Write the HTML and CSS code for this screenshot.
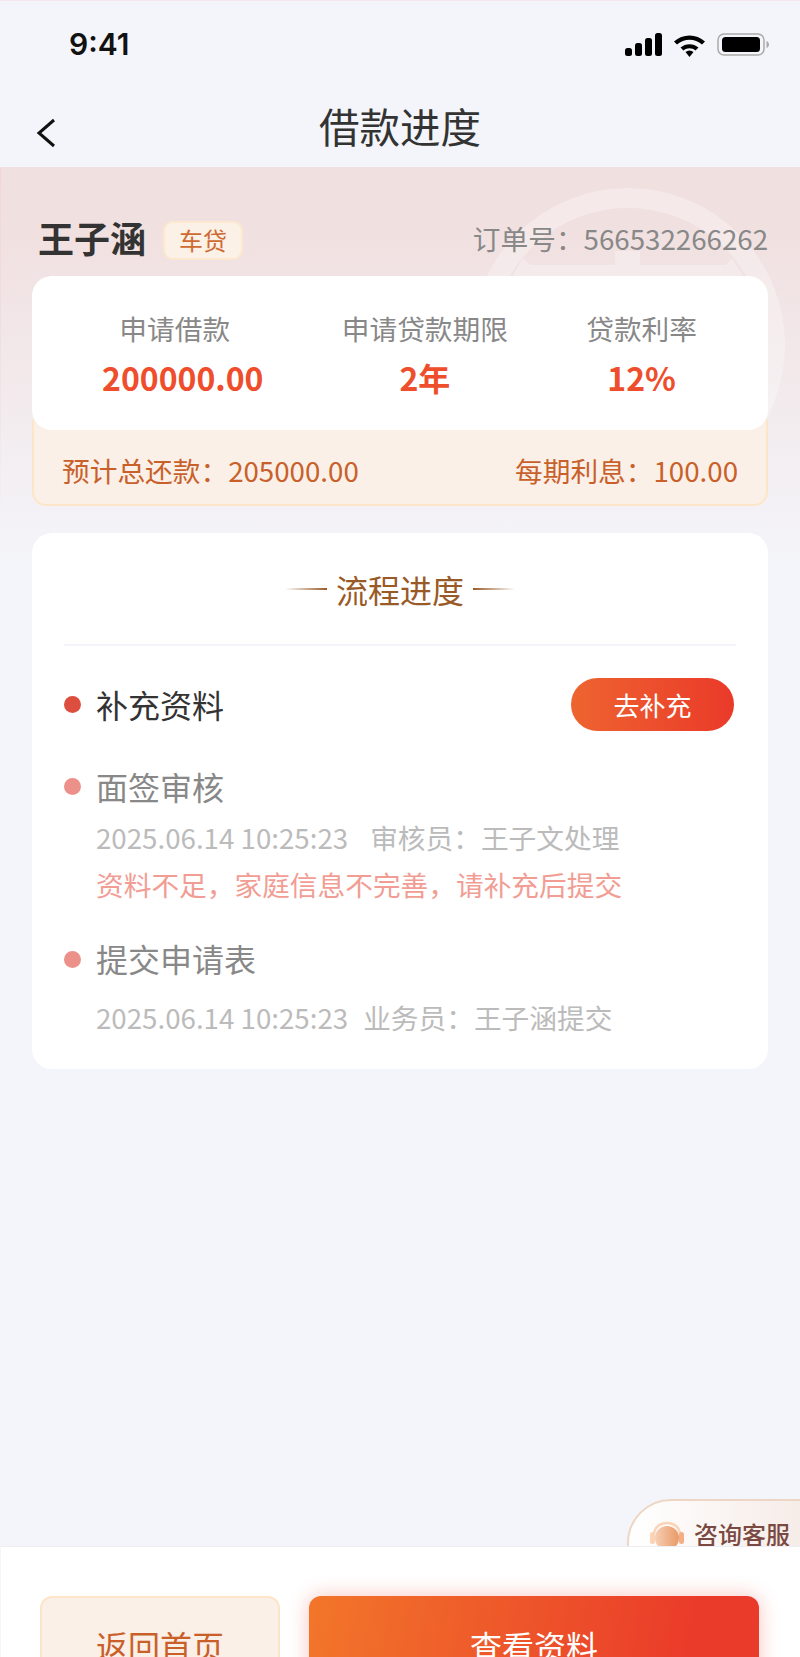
FILE: index.html
```html
<!DOCTYPE html>
<html lang="zh-CN">
<head>
    <meta charset="UTF-8">
    <meta name="viewport" content="width=device-width, initial-scale=1.0">
    <title>借款进度</title>
    <link rel="stylesheet" href="styles.css">
</head>
<body>
    <div class="page">
        <div class="status-bar">
            <span class="time">9:41</span>
            <div class="status-icons">
                <svg width="37" height="23" viewBox="0 0 37 23"><rect x="0" y="15" width="7" height="8" rx="2.500"/><rect x="10" y="10" width="7" height="13" rx="2.500"/><rect x="20" y="5" width="7" height="18" rx="2.500"/><rect x="30" y="0" width="7" height="23" rx="2.500"/></svg>
                <svg width="33" height="24" viewBox="0 0 33 24"><path d="M1 8.5C9.500 .5 23.500 .5 32 8.500L29 11.500C22 5 11 5 4 11.500Z"/><path d="M7.500 14.500C12.500 10 20.500 10 25.500 14.500L22.500 17.500C19 14.500 14 14.500 10.500 17.500Z"/><path d="M12.500 19C15 17 18 17 20.500 19L16.500 24Z"/></svg>
                <svg width="52" height="23" viewBox="0 0 52 23"><rect x="1" y="1" width="46" height="21" rx="6" fill="none" stroke="#aaa" stroke-width="1.500"/><rect x="5" y="4" width="38" height="15" rx="3.500"/><path d="M49.500 8C51 8.500 52 10 52 11.500C52 13 51 14.500 49.500 15Z" fill="#aaa"/></svg>
            </div>
        </div>

        <div class="nav-bar">
            <svg class="back" width="20" height="30" viewBox="0 0 20 30"><path d="M18 2L3 15L18 28" fill="none" stroke="#111" stroke-width="3"/></svg>
            <h1 class="nav-title">借款进度</h1>
        </div>

        <div class="content">
            <svg class="watermark" width="340" height="340" viewBox="0 0 340 340">
                <circle cx="170" cy="170" r="147" fill="none" stroke="#fff" stroke-width="20"/>
                <path d="M65 83L38 130H302L274 83L268 90H182V76H157V90H72Z" fill="#fff"/>
            </svg>

            <div class="order-head">
                <div class="customer">
                    <span class="customer-name">王子涵</span>
                    <span class="tag">车贷</span>
                </div>
                <span class="order-no">订单号：566532266262</span>
            </div>

            <div class="summary">
                <div class="summary-main">
                    <div class="stat stat-amount">
                        <div class="stat-label">申请借款</div>
                        <div class="stat-value">200000.00</div>
                    </div>
                    <div class="stat">
                        <div class="stat-label">申请贷款期限</div>
                        <div class="stat-value">2年</div>
                    </div>
                    <div class="stat">
                        <div class="stat-label">贷款利率</div>
                        <div class="stat-value">12%</div>
                    </div>
                </div>
                <div class="summary-extra">
                    <span>预计总还款：205000.00</span>
                    <span>每期利息：100.00</span>
                </div>
            </div>

            <div class="progress">
                <div class="progress-head">
                    <i class="flourish flourish-left"></i>
                    <span class="progress-title">流程进度</span>
                    <i class="flourish flourish-right"></i>
                </div>

                <div class="step step-current">
                    <div class="step-row">
                        <i class="dot"></i>
                        <span class="step-title">补充资料</span>
                        <button class="step-btn">去补充</button>
                    </div>
                </div>

                <div class="step step-review">
                    <div class="step-row">
                        <i class="dot"></i>
                        <span class="step-title">面签审核</span>
                    </div>
                    <div class="step-meta"><span>2025.06.14 10:25:23</span><span class="meta-who">审核员：王子文处理</span></div>
                    <div class="step-error">资料不足，家庭信息不完善，请补充后提交</div>
                </div>

                <div class="step step-apply">
                    <div class="step-row">
                        <i class="dot"></i>
                        <span class="step-title">提交申请表</span>
                    </div>
                    <div class="step-meta"><span>2025.06.14 10:25:23</span><span class="meta-who">业务员：王子涵提交</span></div>
                </div>
            </div>
        </div>

        <div class="consult">
            <svg width="34" height="34" viewBox="0 0 34 34">
                <defs>
                    <linearGradient id="headGrad" x1="0" y1="0" x2="1" y2="0">
                        <stop offset="0" stop-color="#f7cfb4"/>
                        <stop offset="1" stop-color="#e99a68"/>
                    </linearGradient>
                </defs>
                <path d="M4 15C4 -1 30 -1 30 15" fill="none" stroke="#fbd3b6" stroke-width="2.500"/>
                <rect x="0" y="12" width="5" height="12" rx="2.500" fill="#fbd3b6"/>
                <rect x="29" y="12" width="5" height="12" rx="2.500" fill="#f3ae84"/>
                <circle cx="17" cy="18" r="12" fill="url(#headGrad)"/>
            </svg>
            <span class="consult-text">咨询客服</span>
        </div>

        <div class="footer">
            <button class="btn btn-home">返回首页</button>
            <button class="btn btn-view">查看资料</button>
        </div>
    </div>
</body>
</html>
```

FILE: styles.css
```css
* {
    box-sizing: border-box;
    margin: 0;
    padding: 0;
}

html, body {
    height: 100%;
    overflow: hidden;
}

body {
    font-family: "Noto Sans CJK SC", "Noto Sans", sans-serif;
    background-color: #f4f5fa;
    color: #333;
}

.page {
    position: relative;
    display: flex;
    flex-direction: column;
    height: 1657px;
    overflow: hidden;
    border-top: 1px solid #f5e8ec;
}

.status-bar {
    display: flex;
    justify-content: space-between;
    align-items: center;
    height: 87px;
    padding: 0 31px 0 69px;
}

.time {
    margin-bottom: 2px;
    font-family: Inter, "Liberation Sans", sans-serif;
    font-size: 30px;
    font-weight: 600;
    color: #111;
}

.status-icons {
    display: flex;
    align-items: center;
    gap: 11px;
}

.nav-bar {
    position: relative;
    display: flex;
    justify-content: center;
    align-items: center;
    height: 79px;
    padding-bottom: 4px;
}

.back {
    position: absolute;
    left: 36px;
    top: 30px;
}

.nav-title {
    font-size: 40.500px;
    font-weight: 400;
    line-height: 75px;
}

.content {
    position: relative;
    flex: 1;
    padding: 0 32px;
    background: linear-gradient(180deg, #f1e0e0 0, #f1e0e0 60px, #f4f5fa 400px);
    overflow: hidden;
}

.content::before {
    content: "";
    position: absolute;
    left: 0;
    top: 0;
    width: 1px;
    height: 360px;
    background: linear-gradient(180deg, #f3d6da, rgba(243, 214, 218, 0));
}

.watermark {
    position: absolute;
    left: 458px;
    top: 8px;
    opacity: 0.3;
}

.order-head {
    position: relative;
    display: flex;
    justify-content: space-between;
    align-items: center;
    height: 109px;
    padding: 30px 0 0 6px;
}

.customer {
    display: flex;
    align-items: center;
    gap: 17px;
}

.customer-name {
    font-size: 36px;
    font-weight: 700;
    line-height: 40px;
}

.tag {
    width: 80px;
    height: 39px;
    margin-top: 8px;
    border: 2px solid #fce8cf;
    border-radius: 10px;
    background-color: #fbf1e7;
    color: #cf6a32;
    font-size: 24px;
    line-height: 33px;
    text-align: center;
}

.order-no {
    margin-top: 3px;
    font-size: 27.700px;
    color: #888;
}

.summary {
    position: relative;
    height: 230px;
}

.summary-main {
    position: relative;
    z-index: 1;
    display: flex;
    justify-content: space-between;
    height: 154px;
    padding: 25px 71px 0;
    border-radius: 20px;
    background-color: #fff;
}

.stat {
    text-align: center;
}

.stat-amount {
    margin-left: -1px;
}

.stat-amount .stat-label {
    margin-right: 16px;
}

.stat-label {
    font-size: 27.700px;
    line-height: 54px;
    color: #888;
}

.stat-value {
    font-size: 32px;
    font-weight: 700;
    line-height: 45px;
    color: #ee4e2c;
}

.summary-extra {
    display: flex;
    justify-content: space-between;
    align-items: center;
    height: 86px;
    margin-top: -10px;
    padding: 16px 28px 0;
    border: 2px solid #fde6c8;
    border-top: none;
    border-radius: 0 0 14px 14px;
    background-color: #faf0e8;
    color: #c9602a;
    font-size: 27.700px;
}

.progress {
    position: relative;
    height: 536px;
    margin-top: 27px;
    padding: 0 32px;
    border-radius: 20px;
    background-color: #fff;
}

.progress-head {
    display: flex;
    justify-content: center;
    align-items: center;
    gap: 9px;
    height: 113px;
    margin-bottom: 31px;
    border-bottom: 2px solid #f3f5fa;
}

.progress-title {
    font-size: 32px;
    color: #995a28;
}

.flourish {
    display: block;
    width: 42px;
    height: 2px;
}

.flourish-left {
    background: linear-gradient(90deg, rgba(153, 90, 40, 0), #995a28);
}

.flourish-right {
    background: linear-gradient(90deg, #995a28, rgba(153, 90, 40, 0));
}

.step-row {
    display: flex;
    align-items: center;
}

.dot {
    flex: none;
    width: 17px;
    height: 17px;
    margin-right: 15px;
    border-radius: 50%;
    background-color: #ec918a;
}

.step-title {
    font-size: 32px;
    line-height: 54px;
    color: #888;
}

.step-current .dot {
    background-color: #dd4e3e;
}

.step-current .step-title {
    color: #333;
}

.step-btn {
    width: 163px;
    height: 53px;
    margin-left: auto;
    margin-right: 2px;
    border: none;
    border-radius: 27px;
    background: linear-gradient(90deg, #ee6430, #ea3a2a);
    color: #fff;
    font-family: inherit;
    font-size: 26px;
}

.step-review {
    margin-top: 28px;
}

.step-apply {
    margin-top: 24px;
}

.step-apply .dot {
    margin-top: 3px;
}

.step-meta {
    margin-top: 1px;
    padding-left: 32px;
    font-size: 27.700px;
    line-height: 46px;
    color: #bbb;
}

.meta-who {
    margin-left: 22px;
}

.step-apply .step-meta {
    margin-top: 9px;
}

.step-apply .meta-who {
    margin-left: 15px;
}

.step-error {
    margin-top: 1px;
    padding-left: 32px;
    font-size: 27.700px;
    line-height: 46px;
    color: #f29d94;
}

.consult {
    position: absolute;
    right: -2px;
    top: 1498px;
    display: flex;
    align-items: flex-start;
    gap: 10px;
    width: 175px;
    height: 80px;
    padding: 19px 0 0 21px;
    border: 2px solid #eed6c4;
    border-radius: 44px 0 0 0;
    background: linear-gradient(90deg, #fff, #f6ece8);
}

.consult-text {
    font-size: 24px;
    font-weight: 500;
    line-height: 28px;
    color: #7a4a42;
}

.footer {
    position: absolute;
    left: 1px;
    right: 0;
    top: 1545px;
    display: flex;
    gap: 29px;
    height: 160px;
    padding: 49px 41px 0 39px;
    border-top: 1px solid #eeeef2;
    background-color: #fff;
}

.btn {
    height: 100px;
    border-radius: 12px;
    font-family: inherit;
    font-size: 32px;
}

.btn-home {
    width: 240px;
    padding-bottom: 2px;
    border: 2px solid #fde6c8;
    background-color: #faf0e8;
    color: #c9602a;
}

.btn-view {
    flex: 1;
    padding-bottom: 2px;
    border: none;
    background: linear-gradient(100deg, #f2762a, #ea3a2a 85%);
    box-shadow: 0 0 20px rgba(234, 58, 42, 0.3);
    color: #fff;
}
```
